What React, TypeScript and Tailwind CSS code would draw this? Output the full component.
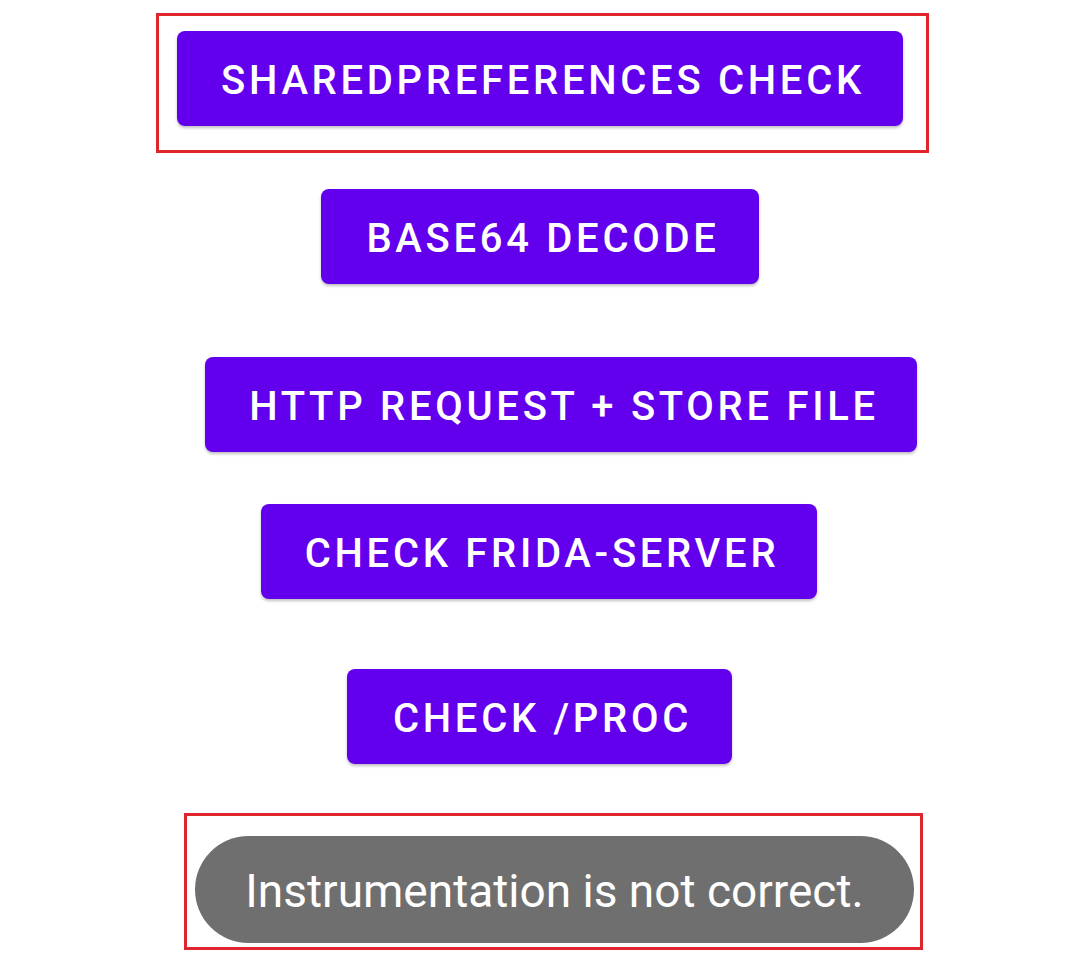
import React from "react";

const btn =
  "h-[95px] rounded-[8px] bg-[#6200ee] text-white font-medium uppercase text-[40px] tracking-[3.7px] flex items-center justify-center pt-[4px] pl-[6px] shadow-[0_2px_3px_rgba(0,0,0,0.25)] leading-none";

const App = () => {
  return (
    <div
      className="w-[1080px] h-[957px] bg-white flex flex-col items-start overflow-hidden"
      style={{ fontFamily: "Roboto, 'Liberation Sans', sans-serif" }}
    >
      {/* first button, outlined */}
      <div className="ml-[156px] mt-[13px] w-[773px] h-[140px] border-[3px] border-[#e0262d] pt-[15px] pl-[18px]">
        <button className={`${btn} w-[726px]`}>SharedPreferences Check</button>
      </div>

      <button className={`${btn} ml-[321px] mt-[36px] w-[438px]`}>Base64 Decode</button>
      <button className={`${btn} ml-[205px] mt-[73px] w-[712px]`}>HTTP Request + Store File</button>
      <button className={`${btn} ml-[261px] mt-[52px] w-[556px]`}>Check Frida-Server</button>
      <button className={`${btn} ml-[347px] mt-[70px] w-[385px]`}>Check /proc</button>

      {/* toast */}
      <div className="ml-[184px] mt-[49px] w-[739px] h-[137px] border-[3px] border-[#e0262d] pt-[20px] pl-[8px]">
        <div className="w-[719px] h-[107px] rounded-full bg-[#6f6f6f] text-white text-[46px] flex items-center justify-center pt-[3px] leading-none">
          Instrumentation is not correct.
        </div>
      </div>
    </div>
  );
};

export default App;
